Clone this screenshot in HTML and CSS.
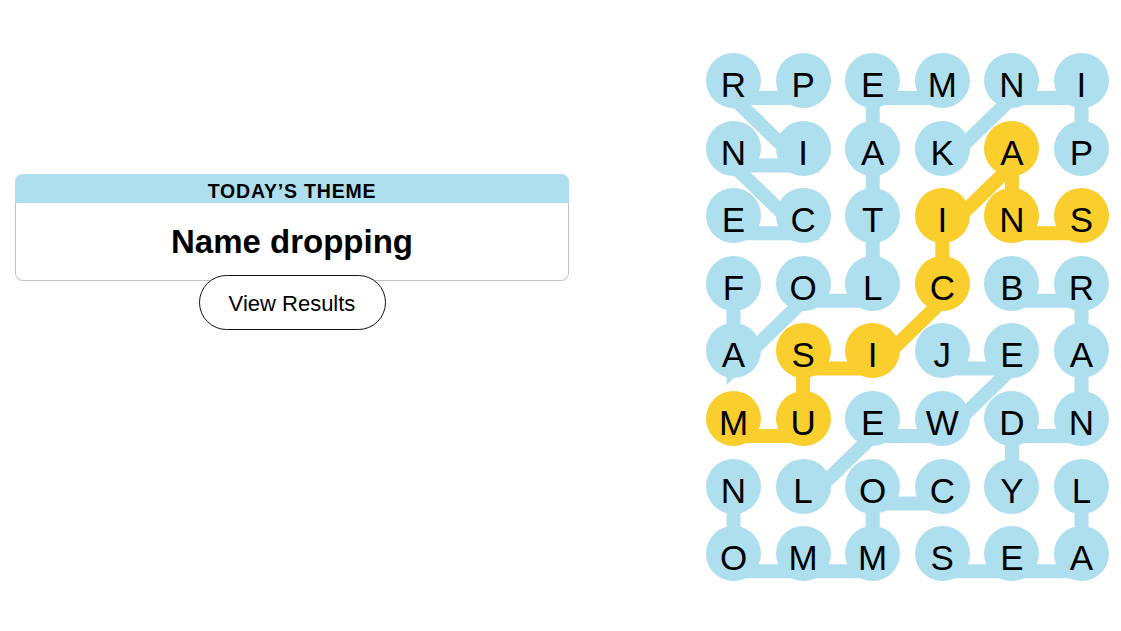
FILE: index.html
```html
<!DOCTYPE html>
<html lang="en">
<head>
<meta charset="utf-8">
<title>Strands</title>
<link rel="stylesheet" href="styles.css">
</head>
<body>
<main class="page">
  <section class="side">
    <div class="theme-card">
      <div class="theme-head">TODAY’S THEME</div>
      <div class="theme-title">Name dropping</div>
    </div>
    <button class="results-btn" type="button">View Results</button>
  </section>

  <section class="board">
    <svg class="paths" width="403" height="529" viewBox="0 0 403 529" aria-hidden="true">
      <g fill="none" stroke-width="14" stroke-linejoin="miter" stroke-linecap="butt">
        <polyline class="p-blue" points="97.1,45 27.5,45 97.1,112.6 27.5,112.6 97.1,180.2 27.5,180.2"/>
        <polyline class="p-blue" points="236.3,45 166.7,45 166.7,112.6 166.7,180.2 166.7,247.8 97.1,247.8 27.5,315.4 27.5,247.8"/>
        <polyline class="p-blue" points="375.5,112.6 375.5,45 305.9,45 236.3,112.6"/>
        <polyline class="p-blue" points="305.9,247.8 375.5,247.8 375.5,315.4 375.5,383 305.9,383 305.9,450.6"/>
        <polyline class="p-blue" points="236.3,315.4 305.9,315.4 236.3,383 166.7,383 97.1,450.6"/>
        <polyline class="p-blue" points="236.3,450.6 166.7,450.6 166.7,518.2 97.1,518.2 27.5,518.2 27.5,450.6"/>
        <polyline class="p-blue" points="236.3,518.2 305.9,518.2 375.5,518.2 375.5,450.6"/>
        <polyline class="p-gold" points="27.5,383 97.1,383 97.1,315.4 166.7,315.4 236.3,247.8 236.3,180.2 305.9,112.6 305.9,180.2 375.5,180.2"/>
      </g>
    </svg>

    <div class="cell">R</div><div class="cell">P</div><div class="cell">E</div><div class="cell">M</div><div class="cell">N</div><div class="cell">I</div>
    <div class="cell">N</div><div class="cell">I</div><div class="cell">A</div><div class="cell">K</div><div class="cell gold">A</div><div class="cell">P</div>
    <div class="cell">E</div><div class="cell">C</div><div class="cell">T</div><div class="cell gold">I</div><div class="cell gold">N</div><div class="cell gold">S</div>
    <div class="cell">F</div><div class="cell">O</div><div class="cell">L</div><div class="cell gold">C</div><div class="cell">B</div><div class="cell">R</div>
    <div class="cell">A</div><div class="cell gold">S</div><div class="cell gold">I</div><div class="cell">J</div><div class="cell">E</div><div class="cell">A</div>
    <div class="cell gold">M</div><div class="cell gold">U</div><div class="cell">E</div><div class="cell">W</div><div class="cell">D</div><div class="cell">N</div>
    <div class="cell">N</div><div class="cell">L</div><div class="cell">O</div><div class="cell">C</div><div class="cell">Y</div><div class="cell">L</div>
    <div class="cell">O</div><div class="cell">M</div><div class="cell">M</div><div class="cell">S</div><div class="cell">E</div><div class="cell">A</div>
  </section>
</main>
</body>
</html>
```

FILE: styles.css
```css
* { box-sizing: border-box; }

html, body {
  margin: 0;
  padding: 0;
  background: #ffffff;
  color: #000000;
  font-family: "Liberation Sans", Arial, sans-serif;
}

.page {
  display: flex;
  align-items: flex-start;
  width: 1121px;
  height: 631px;
  padding: 53px 0 0 15px;
}

.side {
  width: 554px;
  margin-top: 121px;
  display: flex;
  flex-direction: column;
  align-items: center;
}

.theme-card {
  width: 554px;
  border: 1px solid #c3c3c3;
  border-top: 0;
  border-radius: 8px;
  background: #ffffff;
}

.theme-head {
  margin: 0 -1px;
  height: 29px;
  padding-top: 5px;
  line-height: 24px;
  background: #aedfee;
  border-radius: 8px 8px 0 0;
  text-align: center;
  font-size: 19.5px;
  font-weight: 700;
  letter-spacing: 0.8px;
}

.theme-title {
  padding: 20px 0 19px;
  text-align: center;
  font-size: 33px;
  font-weight: 700;
  line-height: 38px;
}

.results-btn {
  display: block;
  width: 187px;
  height: 55px;
  margin-top: -6px;
  padding: 3px 0 0;
  border: 1px solid #121212;
  border-radius: 28px;
  background: #ffffff;
  color: #000000;
  font-family: "Liberation Sans", Arial, sans-serif;
  font-size: 22px;
  font-weight: 400;
  position: relative;
}

.board {
  position: relative;
  margin-left: 137px;
  display: grid;
  grid-template-columns: repeat(6, 55px);
  grid-auto-rows: 55px;
  column-gap: 14.6px;
  row-gap: 12.6px;
}

.paths {
  position: absolute;
  left: 0;
  top: 0;
  overflow: visible;
  z-index: 0;
}

.p-blue { stroke: #aedfee; }
.p-gold { stroke: #f9ce2d; }

.cell {
  position: relative;
  z-index: 1;
  width: 55px;
  height: 55px;
  border-radius: 50%;
  background: #aedfee;
  display: flex;
  align-items: center;
  justify-content: center;
  padding-top: 9px;
  font-size: 35px;
  line-height: 40px;
  color: #000000;
}

.cell.gold { background: #f9ce2d; }
```
